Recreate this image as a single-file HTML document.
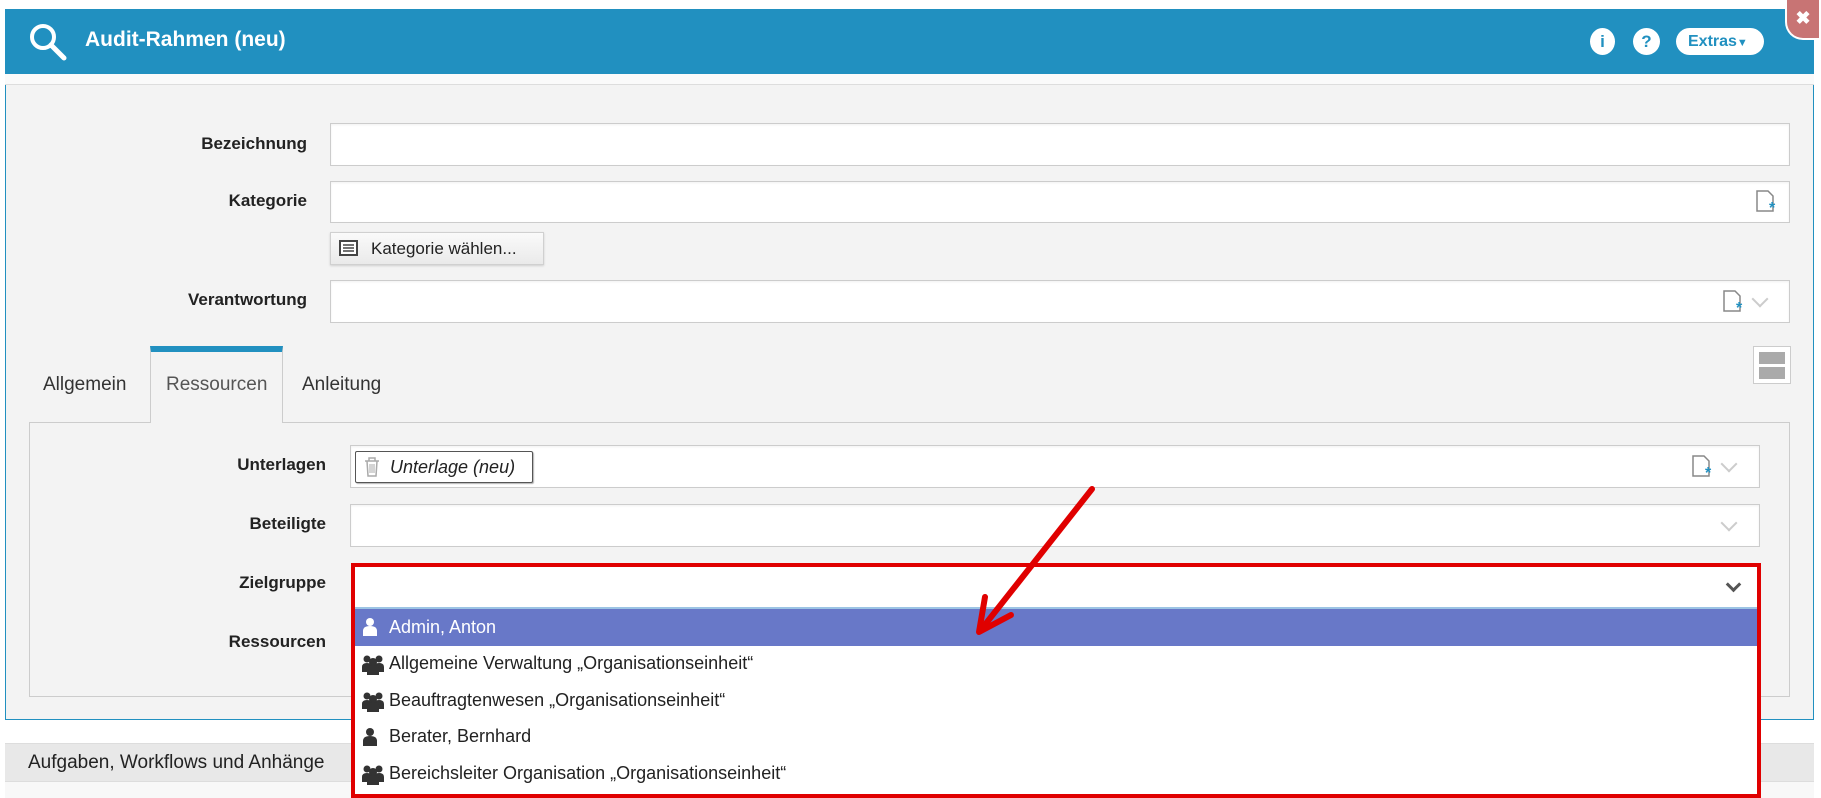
<!DOCTYPE html>
<html><head><meta charset="utf-8"><style>
*{box-sizing:border-box;margin:0;padding:0}
body{width:1821px;height:798px;overflow:hidden;background:#fff;font-family:"Liberation Sans",sans-serif;position:relative;color:#222}
.abs{position:absolute}
.hdr{left:5px;top:9px;width:1809px;height:65px;background:#2190c0}
.title{left:85px;top:28px;color:#fff;font-size:21px;font-weight:bold}
.strip{left:5px;top:74px;width:1809px;height:11px;background:#fafafa;border-bottom:1px solid #ddd}
.body{left:5px;top:85px;width:1809px;height:635px;background:#f3f3f3;border:1px solid #2190c0;border-top:none}
.lbl{font-size:17px;font-weight:bold;text-align:right;width:300px}
.fld{background:#fff;border:1px solid #ccc;box-shadow:inset 0 1px 2px rgba(0,0,0,.06)}
.tab{font-size:19px;color:#333}
.item{left:355px;width:1400px;height:37px;font-size:18px;line-height:37px;padding-left:34px;color:#222}
.chev{width:12px;height:12px;border-right:2px solid #ccc;border-bottom:2px solid #ccc;transform:rotate(45deg)}
</style></head><body>
<div class="abs hdr"></div>
<svg class="abs" style="left:28px;top:22px" width="42" height="40" viewBox="0 0 42 40"><circle cx="15" cy="15" r="11" fill="none" stroke="#fff" stroke-width="4"/><line x1="23" y1="23" x2="36" y2="36" stroke="#fff" stroke-width="5" stroke-linecap="round"/></svg>
<div class="abs title">Audit-Rahmen (neu)</div>
<div class="abs" style="left:1590px;top:28px;width:25px;height:27px;border-radius:50%;background:#fff;color:#2190c0;font-weight:bold;font-size:17px;text-align:center;line-height:27px">i</div>
<div class="abs" style="left:1633px;top:28px;width:27px;height:27px;border-radius:50%;background:#fff;color:#2190c0;font-weight:bold;font-size:17px;text-align:center;line-height:27px">?</div>
<div class="abs" style="left:1676px;top:28px;width:88px;height:27px;border-radius:14px;background:#fff;color:#2190c0;font-weight:bold;font-size:16px;line-height:27px;padding-left:12px">Extras<span style="font-size:11px">▼</span></div>
<div class="abs" style="left:1785px;top:0;width:36px;height:40px;background:#c87474;border-bottom-left-radius:18px;border:2px solid #fff;border-top:none;color:#fff;font-weight:bold;font-size:18px;text-align:center;line-height:36px">✖</div>
<div class="abs strip"></div>
<div class="abs body"></div>

<div class="abs lbl" style="left:7px;top:134px">Bezeichnung</div>
<div class="abs fld" style="left:330px;top:123px;width:1460px;height:43px"></div>
<div class="abs lbl" style="left:7px;top:191px">Kategorie</div>
<div class="abs fld" style="left:330px;top:181px;width:1460px;height:42px"></div>
<svg class="abs" style="left:1756px;top:190px" width="22" height="24"><path d="M1 1h11l5 5v15H1z" fill="#fff" stroke="#888" stroke-width="1.5"/><text x="13" y="23" fill="#2190c0" font-size="16" font-weight="bold" font-family="Liberation Sans">*</text></svg>
<div class="abs" style="left:330px;top:232px;width:214px;height:33px;background:linear-gradient(#fafafa,#eaeaea);border:1px solid #d0d0d0;box-shadow:0 1px 2px rgba(0,0,0,.15);font-size:17px;line-height:31px;padding-left:40px">Kategorie wählen...</div>
<svg class="abs" style="left:339px;top:240px" width="20" height="16"><rect x="1" y="1" width="17" height="14" fill="#fff" stroke="#444" stroke-width="2"/><path d="M4 5h11M4 8h11M4 11h11" stroke="#444" stroke-width="1.5"/></svg>
<div class="abs lbl" style="left:7px;top:290px">Verantwortung</div>
<div class="abs fld" style="left:330px;top:280px;width:1460px;height:43px"></div>
<svg class="abs" style="left:1723px;top:290px" width="22" height="24"><path d="M1 1h11l5 5v15H1z" fill="#fff" stroke="#888" stroke-width="1.5"/><text x="13" y="23" fill="#2190c0" font-size="16" font-weight="bold" font-family="Liberation Sans">*</text></svg>
<div class="abs chev" style="left:1754px;top:293px"></div>

<div class="abs" style="left:29px;top:422px;width:1761px;height:275px;border:1px solid #ccc"></div>
<div class="abs" style="left:150px;top:346px;width:133px;height:77px;background:#f3f3f3;border:1px solid #ccc;border-bottom:none;border-top:6px solid #2190c0"></div>
<div class="abs tab" style="left:43px;top:374px">Allgemein</div>
<div class="abs tab" style="left:166px;top:374px;color:#555">Ressourcen</div>
<div class="abs tab" style="left:302px;top:374px">Anleitung</div>
<div class="abs" style="left:1753px;top:346px;width:38px;height:38px;background:#fff;border:1px solid #ccc;padding:5px"><div style="height:12px;background:#aaa"></div><div style="height:3px"></div><div style="height:12px;background:#aaa"></div></div>

<div class="abs lbl" style="left:26px;top:455px">Unterlagen</div>
<div class="abs fld" style="left:350px;top:445px;width:1410px;height:43px"></div>
<div class="abs" style="left:355px;top:451px;width:178px;height:32px;background:#fff;border:1px solid #555;border-radius:2px;box-shadow:1px 1px 1px rgba(0,0,0,.3);font-size:18px;font-style:italic;line-height:30px;padding-left:34px">Unterlage (neu)</div>
<svg class="abs" style="left:364px;top:457px" width="16" height="20"><path d="M1 4h14M5 4V1h6v3M3 4l1 15h8l1-15" fill="none" stroke="#aaa" stroke-width="1.5"/><path d="M6 7v9M8 7v9M10 7v9" stroke="#aaa"/></svg>
<svg class="abs" style="left:1692px;top:455px" width="22" height="24"><path d="M1 1h11l5 5v15H1z" fill="#fff" stroke="#888" stroke-width="1.5"/><text x="13" y="23" fill="#2190c0" font-size="16" font-weight="bold" font-family="Liberation Sans">*</text></svg>
<div class="abs chev" style="left:1723px;top:458px"></div>
<div class="abs lbl" style="left:26px;top:514px">Beteiligte</div>
<div class="abs fld" style="left:350px;top:504px;width:1410px;height:43px"></div>
<div class="abs chev" style="left:1723px;top:517px"></div>
<div class="abs lbl" style="left:26px;top:573px">Zielgruppe</div>
<div class="abs lbl" style="left:26px;top:632px">Ressourcen</div>

<div class="abs" style="left:5px;top:743px;width:1809px;height:39px;background:#e8e8e8;border-top:1px solid #ddd;border-bottom:1px solid #ddd;font-size:19px;line-height:37px;padding-left:23px">Aufgaben, Workflows und Anhänge</div>
<div class="abs" style="left:5px;top:782px;width:1809px;height:16px;background:#f8f8f8"></div>

<div class="abs" style="left:351px;top:563px;width:1410px;height:235px;background:#fff;border:4px solid #e00000">
 <div class="abs" style="left:0;top:0;width:1402px;height:42px;border-bottom:2px solid #9cc4e4"></div>
 <div class="abs" style="left:1373px;top:12px;width:11px;height:11px;border-right:3px solid #555;border-bottom:3px solid #555;transform:rotate(45deg)"></div>
</div>
<div class="abs item" style="top:609px;background:#6878c8;color:#fff;width:1402px">Admin, Anton</div>
<div class="abs item" style="top:645px">Allgemeine Verwaltung „Organisationseinheit“</div>
<div class="abs item" style="top:682px">Beauftragtenwesen „Organisationseinheit“</div>
<div class="abs item" style="top:718px">Berater, Bernhard</div>
<div class="abs item" style="top:755px">Bereichsleiter Organisation „Organisationseinheit“</div>
<svg class="abs" style="left:362px;top:617px" width="16" height="20"><circle cx="8" cy="5" r="4" fill="#fff"/><path d="M1 19v-5q0-5 7-5t7 5v5z" fill="#fff"/></svg>
<svg class="abs" style="left:362px;top:654px" width="22" height="22"><circle cx="5" cy="5" r="3.5" fill="#333"/><circle cx="17" cy="5" r="3.5" fill="#333"/><circle cx="11" cy="8" r="4" fill="#333"/><path d="M0 18v-5q0-4 5-4t5 4v5zM12 18v-5q0-4 5-4t5 4v5z" fill="#333"/><path d="M5 21v-6q0-4 6-4t6 4v6z" fill="#333"/></svg>
<svg class="abs" style="left:362px;top:691px" width="22" height="22"><circle cx="5" cy="5" r="3.5" fill="#333"/><circle cx="17" cy="5" r="3.5" fill="#333"/><circle cx="11" cy="8" r="4" fill="#333"/><path d="M0 18v-5q0-4 5-4t5 4v5zM12 18v-5q0-4 5-4t5 4v5z" fill="#333"/><path d="M5 21v-6q0-4 6-4t6 4v6z" fill="#333"/></svg>
<svg class="abs" style="left:362px;top:727px" width="16" height="20"><circle cx="8" cy="5" r="4" fill="#333"/><path d="M1 19v-5q0-5 7-5t7 5v5z" fill="#333"/></svg>
<svg class="abs" style="left:362px;top:764px" width="22" height="22"><circle cx="5" cy="5" r="3.5" fill="#333"/><circle cx="17" cy="5" r="3.5" fill="#333"/><circle cx="11" cy="8" r="4" fill="#333"/><path d="M0 18v-5q0-4 5-4t5 4v5zM12 18v-5q0-4 5-4t5 4v5z" fill="#333"/><path d="M5 21v-6q0-4 6-4t6 4v6z" fill="#333"/></svg>

<svg class="abs" style="left:0;top:0" width="1821" height="798"><path d="M1092 489L980 631" stroke="#e00000" stroke-width="6" stroke-linecap="round"/><path d="M985 597L979 632L1011 615" fill="none" stroke="#e00000" stroke-width="6" stroke-linecap="round" stroke-linejoin="round"/></svg>
</body></html>
